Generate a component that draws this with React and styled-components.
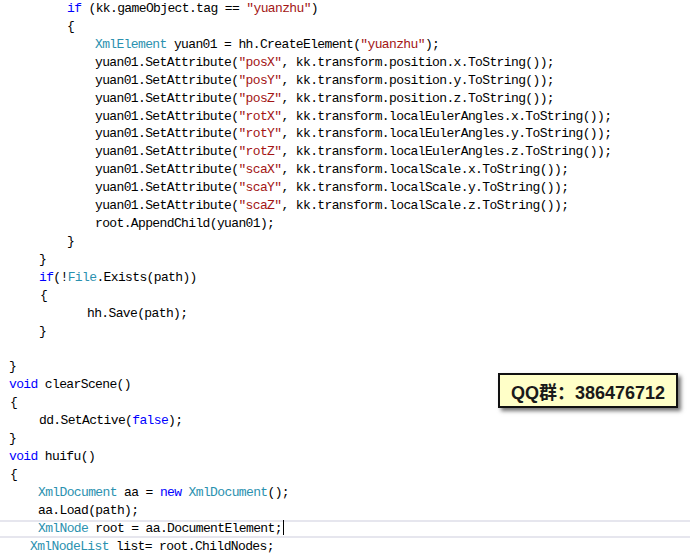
import React from "react";
import styled, { createGlobalStyle } from "styled-components";

const GlobalStyle = createGlobalStyle`
  html, body {
    margin: 0;
    padding: 0;
    background: #ffffff;
  }
`;

const Page = styled.div`
  position: relative;
  width: 690px;
  height: 558px;
  overflow: hidden;
  background: #ffffff;
`;

const Code = styled.div`
  display: flex;
  flex-direction: column;
  font-family: "Liberation Mono", "DejaVu Sans Mono", monospace;
  font-size: 13px;
  letter-spacing: -0.63px;
  color: #000000;
`;

const Line = styled.div`
  height: 17.93px;
  line-height: 17.93px;
  padding-left: ${(p) => p.indent}px;
  white-space: pre;
  box-sizing: border-box;
  ${(p) =>
    p.current &&
    `
    box-shadow: inset 0 2px 0 #e6e6ee, inset 0 -2px 0 #e6e6ee;
  `}
`;

const Kw = styled.span`
  color: #0000ff;
`;

const Type = styled.span`
  color: #2b91af;
`;

const Str = styled.span`
  color: #a31515;
`;

const Caret = styled.span`
  display: inline-block;
  width: 1px;
  height: 15px;
  margin-left: 1px;
  vertical-align: -3px;
  background: #000000;
`;

const QQBadge = styled.div`
  position: absolute;
  left: 498px;
  top: 373px;
  width: 180px;
  height: 35px;
  box-sizing: border-box;
  background: #ffffc8;
  border: 2px solid #111111;
  box-shadow: 3px 3px 4px rgba(0, 0, 0, 0.55);
  display: flex;
  align-items: center;
  justify-content: center;
  font-family: "Liberation Sans", "Noto Sans CJK SC", sans-serif;
  font-weight: bold;
  font-size: 18px;
  color: #1a1a1a;
`;

const attrs = [
  ["posX", "position.x"],
  ["posY", "position.y"],
  ["posZ", "position.z"],
  ["rotX", "localEulerAngles.x"],
  ["rotY", "localEulerAngles.y"],
  ["rotZ", "localEulerAngles.z"],
  ["scaX", "localScale.x"],
  ["scaY", "localScale.y"],
  ["scaZ", "localScale.z"],
];

function App() {
  return (
    <Page>
      <GlobalStyle />
      <Code>
        <Line indent={67}>
          <Kw>if</Kw> (kk.gameObject.tag == <Str>"yuanzhu"</Str>)
        </Line>
        <Line indent={67}>{"{"}</Line>
        <Line indent={95}>
          <Type>XmlElement</Type> yuan01 = hh.CreateElement(<Str>"yuanzhu"</Str>);
        </Line>
        {attrs.map(([key, prop]) => (
          <Line indent={95} key={key}>
            yuan01.SetAttribute(<Str>"{key}"</Str>, kk.transform.{prop}.ToString());
          </Line>
        ))}
        <Line indent={95}>root.AppendChild(yuan01);</Line>
        <Line indent={67}>{"}"}</Line>
        <Line indent={39}>{"}"}</Line>
        <Line indent={39}>
          <Kw>if</Kw>(!<Type>File</Type>.Exists(path))
        </Line>
        <Line indent={40}>{"{"}</Line>
        <Line indent={87}>hh.Save(path);</Line>
        <Line indent={39}>{"}"}</Line>
        <Line indent={10}> </Line>
        <Line indent={9}>{"}"}</Line>
        <Line indent={9}>
          <Kw>void</Kw> clearScene()
        </Line>
        <Line indent={10}>{"{"}</Line>
        <Line indent={39}>
          dd.SetActive(<Kw>false</Kw>);
        </Line>
        <Line indent={9}>{"}"}</Line>
        <Line indent={9}>
          <Kw>void</Kw> huifu()
        </Line>
        <Line indent={10}>{"{"}</Line>
        <Line indent={38}>
          <Type>XmlDocument</Type> aa = <Kw>new</Kw> <Type>XmlDocument</Type>();
        </Line>
        <Line indent={38}>aa.Load(path);</Line>
        <Line indent={38} current>
          <Type>XmlNode</Type> root = aa.DocumentElement;<Caret />
        </Line>
        <Line indent={30}>
          <Type>XmlNodeList</Type> list= root.ChildNodes;
        </Line>
      </Code>
      <QQBadge>QQ群：386476712</QQBadge>
    </Page>
  );
}

export default App;
